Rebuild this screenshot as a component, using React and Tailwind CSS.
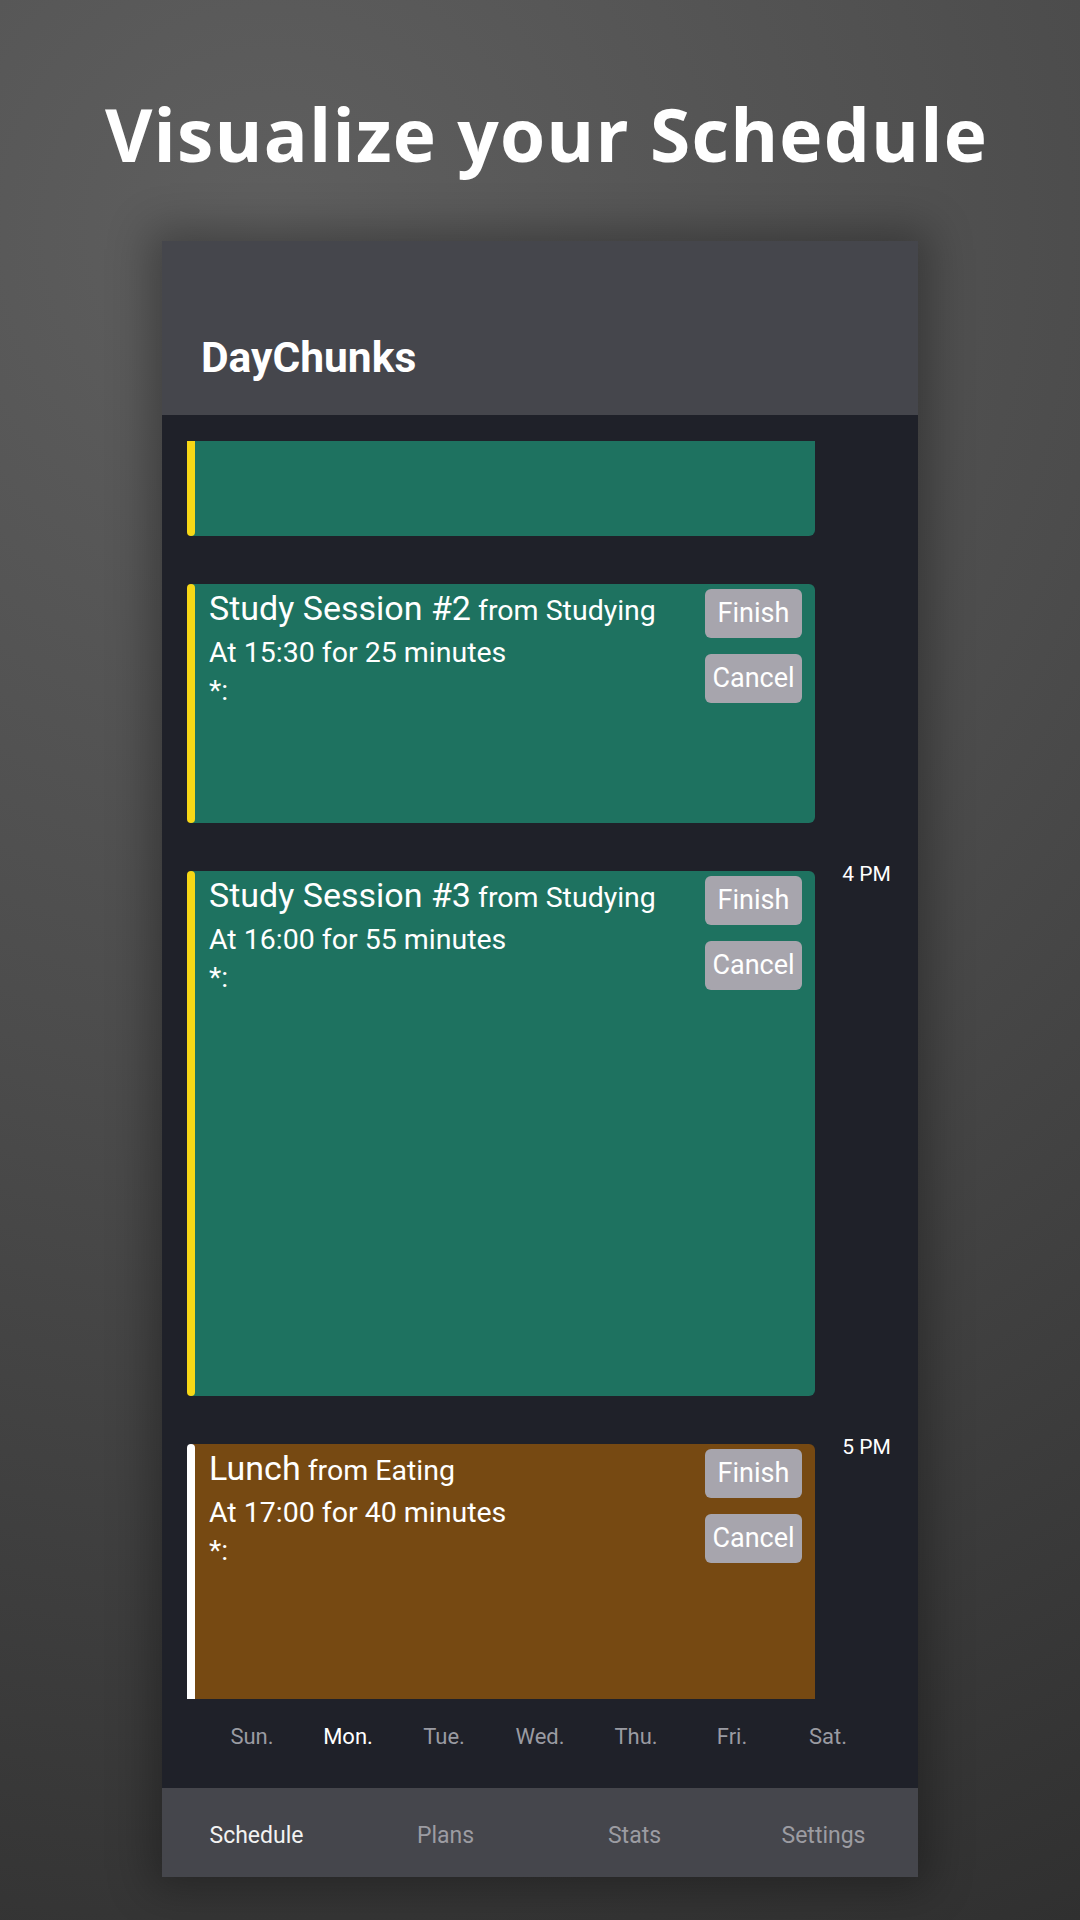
import React from "react";

const ROBOTO = { fontFamily: "Roboto, 'Noto Sans', sans-serif" };

function Buttons() {
  return (
    <div className="flex flex-col gap-[16px] pt-[5px] pr-[13px]">
      <div className="w-[97px] h-[49px] rounded-[6px] bg-[#a7a5ad] flex items-center justify-center text-[27px] text-white leading-none">
        Finish
      </div>
      <div className="w-[97px] h-[49px] rounded-[6px] bg-[#a7a5ad] flex items-center justify-center text-[27px] text-white leading-none">
        Cancel
      </div>
    </div>
  );
}

function Card({ title, from, time, color, bar, height, rounded }) {
  return (
    <div
      className={`w-[628px] flex ${color} ${rounded}`}
      style={{ height }}
    >
      <div className={`w-[8px] shrink-0 ${bar} ${rounded}`} />
      <div className="flex-1 flex justify-between">
        {title ? (
          <div className="pl-[14px] pt-[6px] text-white">
            <div className="leading-[36px] whitespace-nowrap">
              <span className="text-[34px]">{title}</span>
              <span className="text-[28.5px]"> from {from}</span>
            </div>
            <div className="text-[28.5px] leading-[40px]">{time}</div>
            <div className="text-[28.5px] leading-[36px]">*:</div>
          </div>
        ) : (
          <div />
        )}
        {title ? <Buttons /> : null}
      </div>
    </div>
  );
}

function Label({ text }) {
  return (
    <div className="flex-1 flex justify-center">
      <div className="-mt-[7px] text-[21px] leading-[21px] text-white">{text}</div>
    </div>
  );
}

export default function App() {
  const days = ["Sun.", "Mon.", "Tue.", "Wed.", "Thu.", "Fri.", "Sat."];
  const tabs = ["Schedule", "Plans", "Stats", "Settings"];
  return (
    <div className="w-[1080px] h-[1920px] overflow-hidden flex flex-col items-center bg-[radial-gradient(circle_farthest-corner_at_25%_12%,#5f5f5f_0%,#4c4c4c_45%,#303030_100%)]">
      <div className="h-[241px] w-full flex items-start justify-center pt-[89px] pl-[13px]">
        <h1
          className="text-[73px] leading-[90px] font-bold text-white tracking-[1.2px]"
          style={{ fontFamily: "'Open Sans', 'Noto Sans', sans-serif" }}
        >
          Visualize your Schedule
        </h1>
      </div>

      <div
        className="w-[756px] h-[1636px] flex flex-col shadow-[0_0_40px_12px_rgba(0,0,0,0.3)]"
        style={ROBOTO}
      >
        <div className="h-[174px] bg-[#45464c] pl-[39px] pt-[96px]">
          <div className="text-[42.5px] leading-[42px] font-bold text-white">DayChunks</div>
        </div>

        <div className="flex-1 bg-[#1f2129] flex flex-col">
          <div className="mt-[26px] h-[1258px] overflow-hidden pl-[25px] flex flex-col gap-[48px]">
            <div className="flex">
              <Card color="bg-[#1e7260]" bar="bg-[#f7d816]" height={95} rounded="rounded-b-[6px]" />
              <div className="flex-1" />
            </div>
            <div className="flex">
              <Card
                title="Study Session #2"
                from="Studying"
                time="At 15:30 for 25 minutes"
                color="bg-[#1e7260]"
                bar="bg-[#f7d816]"
                height={239}
                rounded="rounded-[6px]"
              />
              <div className="flex-1" />
            </div>
            <div className="flex">
              <Card
                title="Study Session #3"
                from="Studying"
                time="At 16:00 for 55 minutes"
                color="bg-[#1e7260]"
                bar="bg-[#f7d816]"
                height={525}
                rounded="rounded-[6px]"
              />
              <Label text="4 PM" />
            </div>
            <div className="flex">
              <Card
                title="Lunch"
                from="Eating"
                time="At 17:00 for 40 minutes"
                color="bg-[#764912]"
                bar="bg-white"
                height={300}
                rounded="rounded-t-[6px]"
              />
              <Label text="5 PM" />
            </div>
          </div>
          <div className="flex-1 px-[42px] pb-[15px] grid grid-cols-7 items-center">
            {days.map((d) => (
              <div
                key={d}
                className={`text-center text-[22px] ${d === "Mon." ? "text-white" : "text-[#9a9ba2]"}`}
              >
                {d}
              </div>
            ))}
          </div>
        </div>

        <div className="h-[89px] bg-[#45464c] grid grid-cols-4 items-center pt-[8px]">
          {tabs.map((t) => (
            <div
              key={t}
              className={`text-center text-[23px] ${t === "Schedule" ? "text-[#f2f2f2]" : "text-[#9c9ca2]"}`}
            >
              {t}
            </div>
          ))}
        </div>
      </div>
    </div>
  );
}
